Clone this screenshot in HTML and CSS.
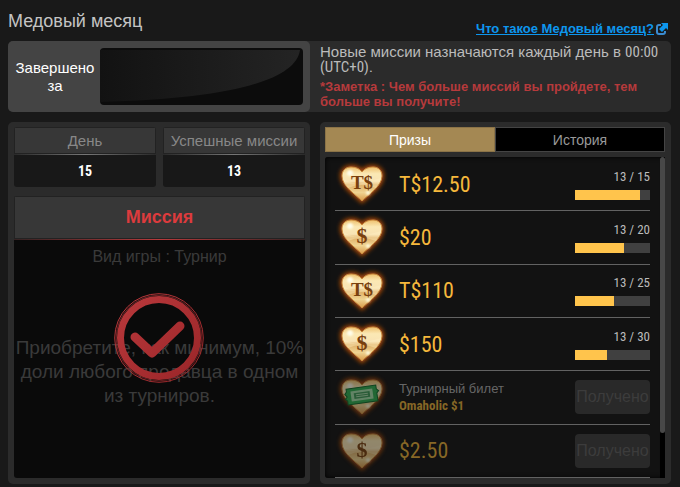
FILE: index.html
```html
<!DOCTYPE html>
<html lang="ru">
<head>
  <meta charset="UTF-8">
  <meta name="viewport" content="width=device-width, initial-scale=1">
  <title>Медовый месяц</title>
  <link rel="stylesheet" href="styles.css">
</head>
<body>

<!-- Heart shapes shared by the prize rows -->
<svg class="defs" width="0" height="0" aria-hidden="true">
  <defs>
    <linearGradient id="gold" x1="0" y1="0" x2="0" y2="1">
      <stop offset="0" stop-color="#eec06c"/>
      <stop offset=".2" stop-color="#fbe8b4"/>
      <stop offset=".42" stop-color="#f8e3b4"/>
      <stop offset=".52" stop-color="#dfb068"/>
      <stop offset=".75" stop-color="#efd391"/>
      <stop offset="1" stop-color="#d99a48"/>
    </linearGradient>
    <filter id="glow" x="-30%" y="-30%" width="160%" height="160%">
      <feGaussianBlur stdDeviation="2"/>
    </filter>
    <filter id="soft" x="-50%" y="-50%" width="200%" height="200%">
      <feGaussianBlur stdDeviation="1"/>
    </filter>
    <path id="heartShape" d="M26 42C20 36 6 27 6 17C6 11 10 8 15 8C20 8 24 10 26 13C28 10 32 8 37 8C42 8 46 11 46 17C46 27 32 36 26 42Z"/>
    <g id="heart">
      <use href="#heartShape" fill="#a8480a" stroke="#a8480a" stroke-width="4" filter="url(#glow)"/>
      <use href="#heartShape" fill="url(#gold)" stroke="#c98a3e" stroke-width="1"/>
      <path d="M7 20Q18 26 26 24T45 19Q44 24 40 29Q25 23 12 29Q8 25 7 20Z" fill="#fff0c4" opacity=".4"/>
      <circle cx="14" cy="14" r="3" fill="#fffdea" filter="url(#soft)"/>
      <circle cx="32" cy="34" r="2" fill="#fffce0" filter="url(#soft)"/>
    </g>
  </defs>
</svg>

<header class="top">
  <h1>Медовый месяц</h1>
  <a class="help" href="#"><span>Что такое Медовый месяц?</span><svg width="14" height="14" viewBox="0 0 14 14" aria-hidden="true">
      <path d="M6 3H4Q2 3 2 5V10Q2 12 4 12H8Q10 12 10 10V9" fill="none" stroke="#3a8bd0" stroke-width="2"/>
      <path d="M6 1H13V8L11 6L7 10L4 7L8 3Z" fill="#0d96ee"/>
    </svg></a>
</header>

<section class="notice columns">
  <div class="timer">
    <div class="timer-label">Завершено за</div>
    <div class="timer-screen">
      <svg viewBox="0 0 203 57" preserveAspectRatio="none" aria-hidden="true">
        <defs>
          <linearGradient id="shine" x1="0" y1="0" x2="1" y2="0">
            <stop offset="0" stop-color="#121212"/>
            <stop offset="1" stop-color="#242424"/>
          </linearGradient>
        </defs>
        <path d="M0 2H200C196 32 130 51 0 54Z" fill="url(#shine)"/>
      </svg>
    </div>
  </div>
  <div class="notice-text">
    <p>Новые миссии назначаются каждый день в <span class="latin">00:00</span> <span class="latin">(UTC+0).</span></p>
    <p class="note">*Заметка : Чем больше миссий вы пройдете, тем больше вы получите!</p>
  </div>
</section>

<main class="columns">

  <!-- Mission -->
  <section class="panel mission-panel">
    <div class="stats">
      <div class="stat">
        <h2>День</h2>
        <p>15</p>
      </div>
      <div class="stat">
        <h2>Успешные миссии</h2>
        <p>13</p>
      </div>
    </div>
    <div class="mission">
      <h2>Миссия</h2>
      <div class="mission-body">
        <p class="game">Вид игры : Турнир</p>
        <p class="task">Приобретите, как минимум, 10% доли любого продавца в одном из турниров.</p>
        <svg class="stamp" width="92" height="92" viewBox="0 0 92 92" role="img" aria-label="Выполнено">
          <defs>
            <linearGradient id="red" gradientUnits="userSpaceOnUse" x1="0" y1="0" x2="92" y2="92">
              <stop offset="0" stop-color="#bb3a3d"/>
              <stop offset="1" stop-color="#982427"/>
            </linearGradient>
          </defs>
          <g fill="none" stroke="url(#red)">
            <circle cx="46" cy="46" r="44.300" stroke-width="1"/>
            <circle cx="46" cy="46" r="38.500" stroke-width="7"/>
            <circle cx="46" cy="46" r="42.800" stroke-width=".600"/>
            <path d="M22 45L39 61L67 34" stroke-width="9" stroke-linecap="round" stroke-linejoin="round"/>
          </g>
        </svg>
      </div>
    </div>
  </section>

  <!-- Prizes -->
  <section class="panel prize-panel">
    <div class="tabs" role="tablist">
      <button type="button" class="tab active" role="tab" aria-selected="true">Призы</button>
      <button type="button" class="tab" role="tab" aria-selected="false">История</button>
    </div>
    <div class="prize-box">
      <ul class="prizes">
        <li class="prize">
          <svg class="icon" width="52" height="50" viewBox="0 0 52 50" aria-hidden="true"><use href="#heart"/><text class="coin coin-ts" x="26" y="30">T$</text></svg>
          <strong class="amount">T$12.50</strong>
          <div class="progress"><span>13 / 15</span><div class="bar"><div class="fill" style="width: 86.67%"></div></div></div>
        </li>
        <li class="prize">
          <svg class="icon" width="52" height="50" viewBox="0 0 52 50" aria-hidden="true"><use href="#heart"/><text class="coin" x="26" y="31">$</text></svg>
          <strong class="amount">$20</strong>
          <div class="progress"><span>13 / 20</span><div class="bar"><div class="fill" style="width: 65%"></div></div></div>
        </li>
        <li class="prize">
          <svg class="icon" width="52" height="50" viewBox="0 0 52 50" aria-hidden="true"><use href="#heart"/><text class="coin coin-ts" x="26" y="30">T$</text></svg>
          <strong class="amount">T$110</strong>
          <div class="progress"><span>13 / 25</span><div class="bar"><div class="fill" style="width: 52%"></div></div></div>
        </li>
        <li class="prize">
          <svg class="icon" width="52" height="50" viewBox="0 0 52 50" aria-hidden="true"><use href="#heart"/><text class="coin" x="26" y="31">$</text></svg>
          <strong class="amount">$150</strong>
          <div class="progress"><span>13 / 30</span><div class="bar"><div class="fill" style="width: 43.33%"></div></div></div>
        </li>
        <li class="prize received">
          <svg class="icon" width="52" height="50" viewBox="0 0 52 50" aria-hidden="true">
            <use href="#heart"/>
            <g transform="rotate(-8 26 23)">
              <path d="M11 15H41V19L43 21L41 23V31H11V27L9 25L11 23L9 20L11 18Z" fill="#2fae50" stroke="#0d6a2b"/>
              <rect x="15" y="18" width="22" height="10" fill="#a5e0aa"/>
              <rect x="18" y="20" width="16" height="6" fill="#3f9a58"/>
              <path d="M20 22H32M20 24H32" stroke="#a9dcaa" stroke-width="1"/>
            </g>
          </svg>
          <div class="ticket"><span>Турнирный билет</span><strong>Omaholic $1</strong></div>
          <button type="button" class="claim" disabled>Получено</button>
        </li>
        <li class="prize received">
          <svg class="icon" width="52" height="50" viewBox="0 0 52 50" aria-hidden="true"><use href="#heart"/><text class="coin" x="26" y="31">$</text></svg>
          <strong class="amount">$2.50</strong>
          <button type="button" class="claim" disabled>Получено</button>
        </li>
      </ul>
      <div class="scrollbar"><div class="thumb"></div></div>
    </div>
  </section>

</main>

</body>
</html>
```

FILE: styles.css
```css
* { box-sizing: border-box; }
body {
  font-family: "Liberation Sans", Arial, sans-serif;
  background: #191919;
  color: #bbb;
  margin: 0;
  padding: 0 9px 3px 8px;
  min-height: 100vh;
  display: flex;
  flex-direction: column;
}
h1, h2, p, ul { margin: 0; padding: 0; }
button { font-family: inherit; }
.defs { position: absolute; }

/* digits and latin text are set in the condensed face */
.latin, .stat p, .amount, .progress, .ticket strong {
  font-family: "Roboto Condensed", Roboto, sans-serif;
}
.latin { line-height: 1px; }

.columns {
  display: grid;
  grid-template-columns: minmax(0, 302fr) minmax(0, 351fr);
  column-gap: 10px;
}

/* Header */
.top {
  display: flex;
  justify-content: space-between;
  align-items: flex-end;
  height: 41px;
}
h1 {
  font-size: 18px;
  font-weight: normal;
  line-height: 20px;
  padding-bottom: 10px;
  color: #c4c4c4;
}
.help {
  display: flex;
  align-items: center;
  gap: 1px;
  padding: 0 2px 4px 0;
  font-size: 13px;
  font-weight: bold;
  line-height: 16px;
  color: #0d96ee;
  text-decoration: none;
}
.help span { text-decoration: underline; }

/* Timer and notice */
.notice {
  background: #2b2b2b;
  border-radius: 5px;
  margin-bottom: 10px;
}
.timer {
  display: flex;
  align-items: center;
  background: #444;
  border-radius: 5px;
  padding: 7px 7px 7px 6px;
}
.timer-label {
  flex: 1;
  font-size: 15px;
  line-height: 18px;
  text-align: center;
  color: #fff;
}
.timer-screen {
  width: 203px;
  height: 57px;
  margin-left: 4px;
  background: #0c0c0c;
  border-radius: 4px;
  overflow: hidden;
}
.timer-screen svg { display: block; width: 100%; height: 100%; }
.notice-text {
  padding: 3px 10px 3px 0;
  font-size: 15px;
  line-height: 15px;
}
.notice-text .note {
  margin-top: 5px;
  font-size: 13px;
  font-weight: bold;
  color: #b63a3c;
}

/* Panels */
main { flex: 1; }
.panel {
  display: flex;
  flex-direction: column;
  background: #2b2b2b;
  border-radius: 5px;
  padding: 5px 5px 6px 6px;
}
.prize-panel { padding: 5px 6px 6px 5px; }

.stats {
  display: grid;
  grid-template-columns: 1fr 1fr;
  gap: 7px;
  margin-bottom: 9px;
}
.stat {
  background: #181818;
  border-radius: 3px;
  text-align: center;
  overflow: hidden;
}
.stat h2 {
  border-style: solid;
  border-width: 0 0 1px;
  border-image: linear-gradient(to right, #292929, #777, #292929) 1;
  background: #373737;
  box-shadow: inset 0 0 0 1px #222;
  font-size: 15px;
  font-weight: normal;
  line-height: 27px;
  color: #888;
}
.stat p {
  font-size: 14px;
  font-weight: bold;
  line-height: 32px;
  color: #fff;
}

.mission {
  flex: 1;
  display: flex;
  flex-direction: column;
  background: #0a0a0a;
  border-radius: 3px;
  overflow: hidden;
  text-align: center;
}
.mission h2 {
  background: #373737;
  box-shadow: inset 0 0 0 1px #222;
  border-style: solid;
  border-width: 0 0 1px;
  border-image: linear-gradient(to right, #332222, #b93a3c, #332222) 1;
  font-size: 18px;
  line-height: 43px;
  color: #dc3b3d;
}
.mission-body {
  position: relative;
  flex: 1;
  display: flex;
  flex-direction: column;
  color: #3a3a3a;
}
.game { font-size: 16px; line-height: 34px; }
.task {
  flex: 1;
  display: flex;
  align-items: center;
  padding-bottom: 8px;
  font-size: 19px;
  line-height: 24px;
}
/* stamp lies over the task text */
.stamp {
  position: absolute;
  top: 52px;
  left: 50%;
  margin-left: -47px;
}

/* Tabs */
.tabs { display: flex; margin-bottom: 5px; }
.tab {
  flex: 1;
  height: 25px;
  padding: 0;
  border: 1px solid #444;
  background: #000;
  font-size: 14px;
  color: #999;
  cursor: pointer;
}
.tab.active {
  background: #a48853;
  border-color: #8b7347;
  color: #fff;
}

/* Prize list */
.prize-box {
  flex: 1;
  display: flex;
  background: #121212;
  box-shadow: inset 0 0 5px #000;
  border-radius: 3px 0 0 3px;
}
.prizes {
  flex: 1;
  display: grid;
  grid-auto-rows: 1fr;
  list-style: none;
  padding: 1px 10px 0;
}
.prize {
  display: flex;
  align-items: center;
  border-bottom: 1px solid #626262;
}
.icon { flex: none; margin-left: 1px; }
.amount {
  flex: 1;
  margin-left: 11px;
  font-size: 22px;
  font-weight: normal;
  color: #f6b83c;
}
.coin {
  font-family: "Liberation Serif", serif;
  font-size: 22px;
  font-weight: bold;
  text-anchor: middle;
  fill: #79400e;
}
.coin-ts { font-size: 19px; }
.progress {
  width: 75px;
  font-size: 13px;
  line-height: 16px;
  text-align: right;
}
.bar { height: 10px; margin-top: 5px; background: #404040; }
.fill { height: 100%; background: #ffc44c; }
.ticket {
  flex: 1;
  margin-left: 11px;
  font-size: 13px;
  line-height: 17px;
  color: #666;
}
.ticket span, .ticket strong { display: block; }
.ticket strong { color: #866726; }
.received .icon { opacity: .55; }
.received .amount { color: #866726; }
.claim {
  width: 75px;
  height: 34px;
  padding: 0;
  border: 0;
  border-radius: 4px;
  background: #292929;
  font-size: 16px;
  color: #3c3c3c;
}
.scrollbar { width: 5px; background: #000; }
.thumb { height: 86%; background: #484848; border-radius: 3px; }
```
